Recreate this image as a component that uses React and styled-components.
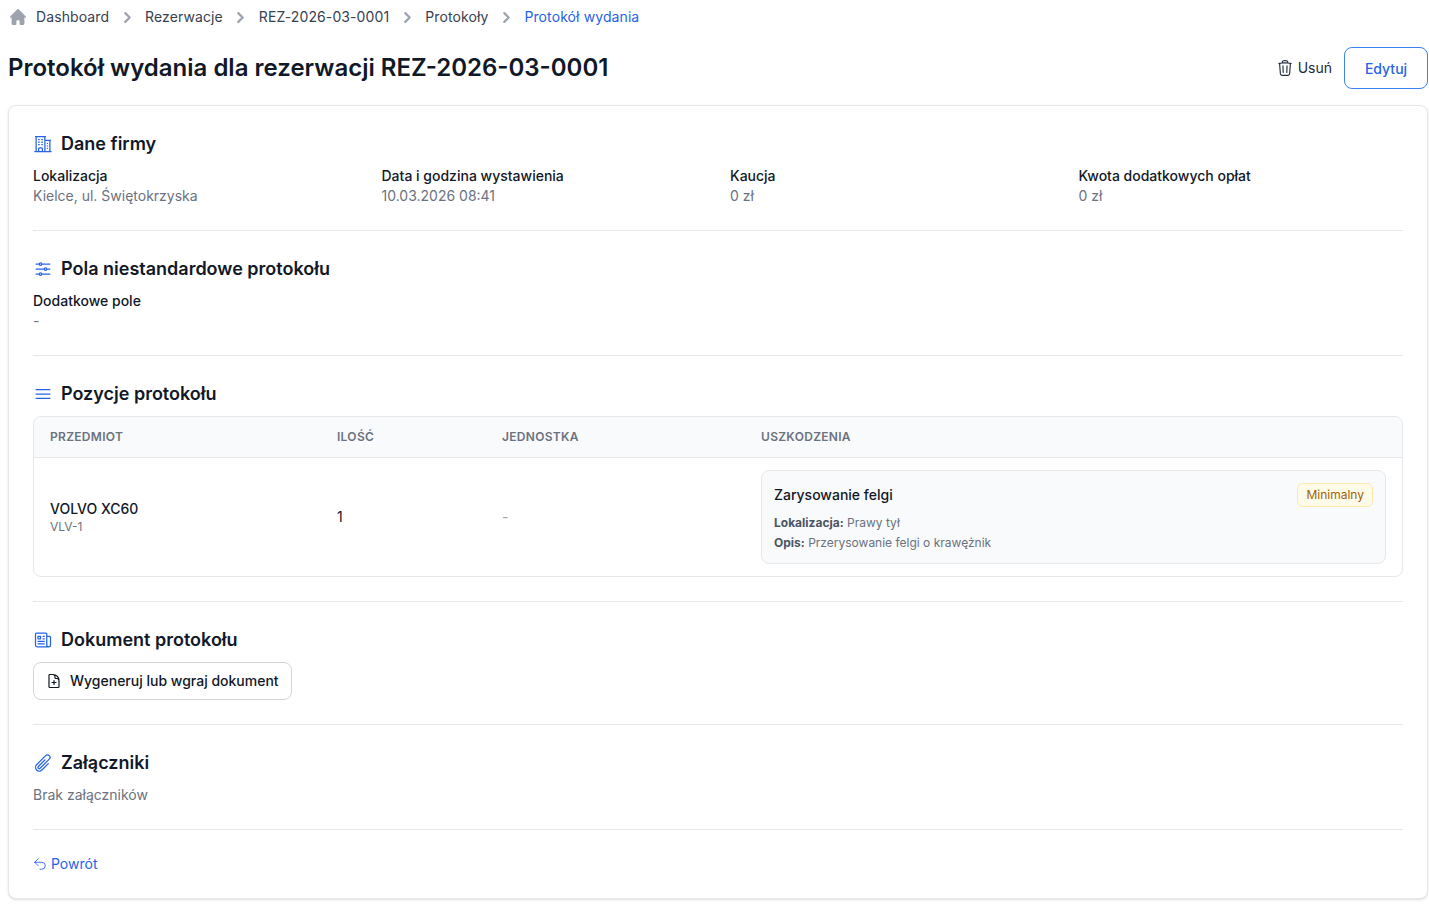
import React from "react";
import styled, { createGlobalStyle } from "styled-components";
import {
  HiOutlineTrash,
  HiOutlineBuildingOffice2,
  HiOutlineAdjustmentsHorizontal,
  HiOutlineBars3,
  HiOutlineNewspaper,
  HiOutlineDocumentPlus,
  HiOutlinePaperClip,
  HiOutlineArrowUturnLeft,
} from "react-icons/hi2";

const GlobalStyle = createGlobalStyle`
  * { box-sizing: border-box; }
  body {
    margin: 0;
    background: #ffffff;
    font-family: "Inter", "Liberation Sans", sans-serif;
    color: #111827;
  }
`;

const Page = styled.div`
  padding: 0 1px 8px 8px;
`;

const Breadcrumbs = styled.nav`
  display: flex;
  align-items: center;
  height: 34px;
  font-size: 14px;
  line-height: 20px;
  letter-spacing: 0.1px;
  color: #374151;
`;

const Crumb = styled.span`
  color: ${(p) => (p.$active ? "#2563eb" : "#374151")};
`;

const HomeSvg = styled.svg`
  width: 16px;
  height: 16px;
  color: #9ca3af;
  margin-left: 2px;
  margin-right: 10px;
`;

const ChevronSvg = styled.svg`
  width: 7px;
  height: 11px;
  color: #9ca3af;
  margin: 0 14.5px;
`;

const HomeIcon = () => (
  <HomeSvg viewBox="0 0 20 20" fill="currentColor">
    <path d="m19.707 9.293-2-2-7-7a1 1 0 0 0-1.414 0l-7 7-2 2a1 1 0 0 0 1.414 1.414L2 10.414V18a2 2 0 0 0 2 2h3a1 1 0 0 0 1-1v-4a1 1 0 0 1 1-1h2a1 1 0 0 1 1 1v4a1 1 0 0 0 1 1h3a2 2 0 0 0 2-2v-7.586l.293.293a1 1 0 0 0 1.414-1.414Z" />
  </HomeSvg>
);

const Chevron = () => (
  <ChevronSvg viewBox="0 0 6 10" fill="none">
    <path
      d="m1 9 4-4-4-4"
      stroke="currentColor"
      strokeWidth="2"
      strokeLinecap="round"
      strokeLinejoin="round"
    />
  </ChevronSvg>
);

const TitleRow = styled.div`
  display: flex;
  align-items: center;
  justify-content: space-between;
  margin-top: 13px;
  margin-bottom: 16px;
`;

const Title = styled.h1`
  margin: 0;
  font-size: 24px;
  line-height: 32px;
  font-weight: 600;
  color: #111827;
`;

const Actions = styled.div`
  display: flex;
  align-items: center;
  gap: 12px;
`;

const DeleteButton = styled.button`
  display: flex;
  align-items: center;
  gap: 4px;
  padding: 0;
  border: 0;
  background: none;
  font: inherit;
  font-size: 14px;
  line-height: 20px;
  color: #1f2937;
  svg {
    width: 18px;
    height: 18px;
  }
`;

const EditButton = styled.button`
  width: 84px;
  height: 42px;
  border: 1px solid #3b82f6;
  border-radius: 8px;
  background: #ffffff;
  font: inherit;
  font-size: 14px;
  font-weight: 500;
  color: #2563eb;
`;

const Card = styled.main`
  background: #ffffff;
  border: 1px solid #e5e7eb;
  border-radius: 8px;
  box-shadow: 0 1px 3px rgba(0, 0, 0, 0.1), 0 1px 2px -1px rgba(0, 0, 0, 0.1);
  padding: 24px;
`;

const Section = styled.section`
  padding-bottom: 24px;
  margin-bottom: 24px;
  border-bottom: 1px solid #e5e7eb;
`;

const SectionTitle = styled.h2`
  display: flex;
  align-items: center;
  gap: 8px;
  margin: 0 0 8px;
  font-size: 18px;
  line-height: 28px;
  font-weight: 600;
  color: #111827;
  svg {
    width: 20px;
    height: 20px;
    color: #2563eb;
  }
`;

const InfoGrid = styled.div`
  display: grid;
  grid-template-columns: repeat(4, 1fr);
  gap: 24px;
`;

const InfoLabel = styled.div`
  font-size: 14px;
  line-height: 20px;
  font-weight: 500;
  color: #111827;
`;

const InfoValue = styled.div`
  font-size: 14px;
  line-height: 20px;
  color: #6b7280;
`;

const TableWrap = styled.div`
  border: 1px solid #e5e7eb;
  border-radius: 8px;
  overflow: hidden;
`;

const TableRow = styled.div`
  display: grid;
  grid-template-columns: 287px 165px 259px 1fr;
  align-items: center;
`;

const TableHead = styled(TableRow)`
  height: 41px;
  background: #f9fafb;
  border-bottom: 1px solid #e5e7eb;
`;

const HeadCell = styled.div`
  padding: 0 16px;
  font-size: 12px;
  line-height: 16px;
  font-weight: 600;
  letter-spacing: 0.3px;
  color: #6b7280;
  text-transform: uppercase;
`;

const Cell = styled.div`
  padding: 12px 16px;
  font-size: 14px;
  line-height: 20px;
  color: ${(p) => (p.$muted ? "#9ca3af" : "#111827")};
`;

const ItemName = styled.div`
  font-size: 14px;
  line-height: 20px;
  font-weight: 500;
  color: #111827;
`;

const ItemCode = styled.div`
  font-size: 12px;
  line-height: 16px;
  color: #6b7280;
`;

const DamageCard = styled.div`
  border: 1px solid #e5e7eb;
  border-radius: 8px;
  background: #f9fafb;
  padding: 12px 12px 10px;
`;

const DamageHeader = styled.div`
  display: flex;
  align-items: center;
  justify-content: space-between;
  margin-bottom: 6px;
`;

const DamageTitle = styled.div`
  font-size: 14px;
  line-height: 20px;
  font-weight: 500;
  color: #111827;
`;

const Badge = styled.span`
  border: 1px solid #fde9a8;
  border-radius: 6px;
  background: #fefce8;
  padding: 3px 8px;
  font-size: 12px;
  line-height: 16px;
  font-weight: 400;
  color: #a16207;
`;

const DamageLine = styled.div`
  font-size: 12px;
  line-height: 20px;
  color: #6b7280;
  b {
    font-weight: 700;
    color: #4b5563;
  }
`;

const OutlineButton = styled.button`
  display: flex;
  align-items: center;
  gap: 8px;
  height: 38px;
  padding: 0 12px 1px;
  border: 1px solid #d1d5db;
  border-radius: 8px;
  background: #ffffff;
  font: inherit;
  font-size: 14px;
  font-weight: 500;
  color: #111827;
  svg {
    width: 16px;
    height: 16px;
    stroke-width: 1.8;
  }
`;

const EmptyText = styled.div`
  font-size: 14px;
  line-height: 20px;
  color: #6b7280;
`;

const BackLink = styled.a`
  display: flex;
  align-items: center;
  gap: 4px;
  width: fit-content;
  font-size: 14px;
  line-height: 20px;
  color: #2563eb;
  svg {
    width: 14px;
    height: 14px;
  }
`;

const crumbs = ["Dashboard", "Rezerwacje", "REZ-2026-03-0001", "Protokoły"];

const infoItems = [
  { label: "Lokalizacja", value: "Kielce, ul. Świętokrzyska" },
  { label: "Data i godzina wystawienia", value: "10.03.2026 08:41" },
  { label: "Kaucja", value: "0 zł" },
  { label: "Kwota dodatkowych opłat", value: "0 zł" },
];

const App = () => {
  return (
    <Page>
      <GlobalStyle />
      <Breadcrumbs>
        <HomeIcon />
        {crumbs.map((crumb) => (
          <React.Fragment key={crumb}>
            <Crumb>{crumb}</Crumb>
            <Chevron />
          </React.Fragment>
        ))}
        <Crumb $active>Protokół wydania</Crumb>
      </Breadcrumbs>

      <TitleRow>
        <Title>Protokół wydania dla rezerwacji REZ-2026-03-0001</Title>
        <Actions>
          <DeleteButton>
            <HiOutlineTrash />
            Usuń
          </DeleteButton>
          <EditButton>Edytuj</EditButton>
        </Actions>
      </TitleRow>

      <Card>
        <Section>
          <SectionTitle>
            <HiOutlineBuildingOffice2 />
            Dane firmy
          </SectionTitle>
          <InfoGrid>
            {infoItems.map((item) => (
              <div key={item.label}>
                <InfoLabel>{item.label}</InfoLabel>
                <InfoValue>{item.value}</InfoValue>
              </div>
            ))}
          </InfoGrid>
        </Section>

        <Section>
          <SectionTitle>
            <HiOutlineAdjustmentsHorizontal />
            Pola niestandardowe protokołu
          </SectionTitle>
          <InfoLabel>Dodatkowe pole</InfoLabel>
          <InfoValue>-</InfoValue>
        </Section>

        <Section>
          <SectionTitle>
            <HiOutlineBars3 />
            Pozycje protokołu
          </SectionTitle>
          <TableWrap>
            <TableHead>
              <HeadCell>Przedmiot</HeadCell>
              <HeadCell>Ilość</HeadCell>
              <HeadCell>Jednostka</HeadCell>
              <HeadCell>Uszkodzenia</HeadCell>
            </TableHead>
            <TableRow>
              <Cell>
                <ItemName>VOLVO XC60</ItemName>
                <ItemCode>VLV-1</ItemCode>
              </Cell>
              <Cell>1</Cell>
              <Cell $muted>-</Cell>
              <Cell>
                <DamageCard>
                  <DamageHeader>
                    <DamageTitle>Zarysowanie felgi</DamageTitle>
                    <Badge>Minimalny</Badge>
                  </DamageHeader>
                  <DamageLine>
                    <b>Lokalizacja:</b> Prawy tył
                  </DamageLine>
                  <DamageLine>
                    <b>Opis:</b> Przerysowanie felgi o krawężnik
                  </DamageLine>
                </DamageCard>
              </Cell>
            </TableRow>
          </TableWrap>
        </Section>

        <Section>
          <SectionTitle>
            <HiOutlineNewspaper />
            Dokument protokołu
          </SectionTitle>
          <OutlineButton>
            <HiOutlineDocumentPlus />
            Wygeneruj lub wgraj dokument
          </OutlineButton>
        </Section>

        <Section>
          <SectionTitle>
            <HiOutlinePaperClip />
            Załączniki
          </SectionTitle>
          <EmptyText>Brak załączników</EmptyText>
        </Section>

        <BackLink>
          <HiOutlineArrowUturnLeft />
          Powrót
        </BackLink>
      </Card>
    </Page>
  );
};

export default App;
